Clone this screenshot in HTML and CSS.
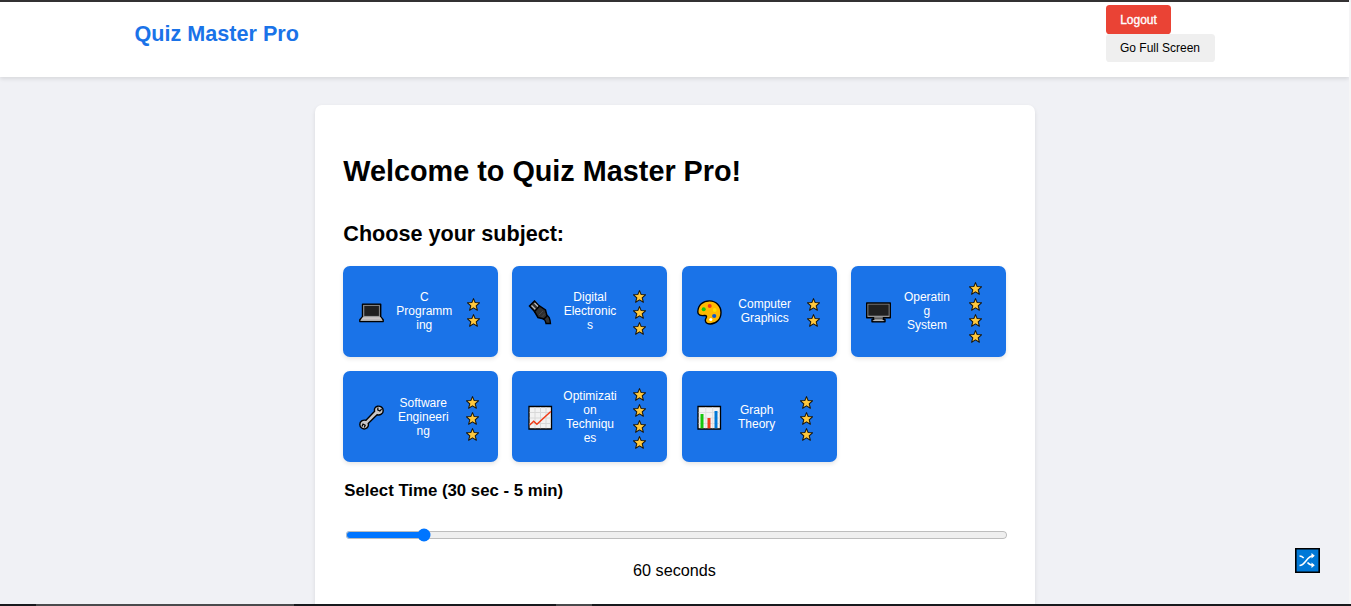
FILE: index.html
```html
<!DOCTYPE html>
<html lang="en">
<head>
<meta charset="utf-8">
<title>Quiz Master Pro</title>
<link rel="stylesheet" href="styles.css">
</head>
<body>
<svg class="defs" width="0" height="0" aria-hidden="true">
  <symbol id="star" viewBox="0 0 13 13"><path d="M6.500 .6 8.200 4.600 12.500 4.800 9.200 7.800 10.400 12.200 6.500 9.900 2.600 12.200 3.800 7.800 .5 4.800 4.800 4.600Z" fill="#ffc83d" stroke="#17150f" stroke-width="1.050" stroke-linejoin="round"/></symbol>
</svg>
<div class="window-edge"></div>
<div class="page">
  <header class="header">
    <div class="header-inner">
      <div class="logo">Quiz Master Pro</div>
      <div class="actions">
        <button class="btn btn-logout">Logout</button>
        <button class="btn btn-full">Go Full Screen</button>
      </div>
    </div>
  </header>
  <main class="panel">
    <h1 class="title">Welcome to Quiz Master Pro!</h1>
    <h2 class="subtitle">Choose your subject:</h2>
    <div class="subjects">
      <div class="subject s-c">
        <svg class="icon" viewBox="0 0 25 25"><path d="M3.500 4.200h18.200v12.500l2.500 3v1.900H.8v-1.900l2.700-3Z" fill="#aaa" stroke="#000" stroke-width="1.400" stroke-linejoin="round"/><path d="M4.200 4.900h16.800v11.500H4.200Z" fill="#808080"/><path d="M5.300 6h14.600v9.900H5.300Z" fill="#202020"/><path d="M3.700 17.300h17.800l1.500 2.300H2.100Z" fill="#c9c4c4"/></svg>
        <span class="label">C<br>Programm<br>ing</span>
        <span class="stars"><svg><use href="#star"/></svg><svg><use href="#star"/></svg></span>
      </div>
      <div class="subject s-digital">
        <svg class="icon" viewBox="0 0 25 25"><path d="M16.500 14c5 1.500 5.500 5 6 9.500h-4.500c-.2-3-1-4-3.500-5Z" fill="#333" stroke="#000" stroke-width="1.300"/><path d="M6.500 1 1.500 6 7 12l5-5Z" fill="#333" stroke="#000" stroke-width="1.500"/><path d="m3.500 5.500 4 4M6.500 3l4 4" stroke="#bbb" stroke-width="1.300"/><path d="M11.500 6 6.500 11.500l3.500 6 6 1.500 3-3-1.500-6Z" fill="#303030" stroke="#000" stroke-width="1.500"/><path d="m11 15 4-4m-1.500 6 3.500-3.500" stroke="#484848"/></svg>
        <span class="label">Digital<br>Electronic<br>s</span>
        <span class="stars"><svg><use href="#star"/></svg><svg><use href="#star"/></svg><svg><use href="#star"/></svg></span>
      </div>
      <div class="subject s-graphics">
        <svg class="icon" viewBox="0 0 25 25"><path d="M.8 12C1 5 6 .9 12.500.9 19 .9 24 6 24 12.500c0 6.800-4.800 11.500-10.700 11.500-5 0-5.800-3.500-4.300-5.800 1.100-1.800.5-2.900-1.600-2.700C4 15.800.8 15.500.8 12Z" fill="#ffb900" stroke="#000" stroke-width="1.400"/><circle cx="12.700" cy="6" r="2" fill="#f03a17"/><circle cx="6.700" cy="9.200" r="2" fill="#16c60c"/><circle cx="17.700" cy="10" r="1.900" fill="#ffdf00"/><circle cx="17.200" cy="16" r="2.100" fill="#1057c8"/><circle cx="13.800" cy="19.500" r="1.600" fill="#fff"/></svg>
        <span class="label">Computer<br>Graphics</span>
        <span class="stars"><svg><use href="#star"/></svg><svg><use href="#star"/></svg></span>
      </div>
      <div class="subject s-os">
        <svg class="icon" viewBox="0 0 25 25"><path d="M.7 3h23.600v14.800h-7v1.700h1.700v2.300H6v-2.300h1.700v-1.700h-7Z" fill="#929292" stroke="#000" stroke-width="1.400" stroke-linejoin="round"/><path d="M2.300 4.500h20.400v11.200H2.300Z" fill="#202020"/><path d="M8 18.200h9" stroke="#444"/><path d="M7.500 20.600h10" stroke="#b8b8b8"/></svg>
        <span class="label">Operatin<br>g<br>System</span>
        <span class="stars"><svg><use href="#star"/></svg><svg><use href="#star"/></svg><svg><use href="#star"/></svg><svg><use href="#star"/></svg></span>
      </div>
      <div class="subject s-software">
        <svg class="icon" viewBox="0 0 25 25"><path d="M18.500 1.200c-2.300.5-3.500 2.600-2.900 5L7 15.300c-3.200-.8-6.200 1-6.200 4.100 0 3 3 5.200 5.700 4.300 2.300-.7 3.400-3 2.700-5.200l8.900-8.700c3 .8 6.100-1 6.100-4.100 0-3-2.500-4.900-5.700-4.500Z" fill="#c8c5c5" stroke="#000" stroke-width="1.400" stroke-linejoin="round"/><path d="m3 21.500 1-2.500 2.200 1.300-.9 2.200M19 2.500l-.3 2.300 2.200 1.200 1.700-1.800" fill="none" stroke="#000" stroke-width="1.200"/></svg>
        <span class="label">Software<br>Engineeri<br>ng</span>
        <span class="stars"><svg><use href="#star"/></svg><svg><use href="#star"/></svg><svg><use href="#star"/></svg></span>
      </div>
      <div class="subject s-optim">
        <svg class="icon" viewBox="0 0 25 25"><path d="M1 1.500h22.500V24H1Z" fill="#f2f2f2" stroke="#000" stroke-width="1.300"/><path d="M7 2.200v21M12.500 2.200v21M18 2.200v21M1.700 7.500h21M1.700 13h21M1.700 18.500h21" stroke="#d8d8d8"/><path d="m1.700 20 4-3.700 3.200 3L22.800 6.500" fill="none" stroke="#f03a17" stroke-width="1.500"/></svg>
        <span class="label">Optimizati<br>on<br>Techniqu<br>es</span>
        <span class="stars"><svg><use href="#star"/></svg><svg><use href="#star"/></svg><svg><use href="#star"/></svg><svg><use href="#star"/></svg></span>
      </div>
      <div class="subject s-graph">
        <svg class="icon" viewBox="0 0 25 25"><path d="M1 1.500h22.500V24H1Z" fill="#f2f2f2" stroke="#000" stroke-width="1.300"/><path d="M8.800 2.200v21M15.700 2.200v21M1.700 7.500h21M1.700 13h21M1.700 18.500h21" stroke="#dedede"/><path d="M3.500 9h3v14.300h-3Z" fill="#16c60c"/><path d="M10.500 13h3v10.300h-3Z" fill="#f03a17"/><path d="M17.500 6h3v17.300h-3Z" fill="#0078d7"/></svg>
        <span class="label">Graph<br>Theory</span>
        <span class="stars"><svg><use href="#star"/></svg><svg><use href="#star"/></svg><svg><use href="#star"/></svg></span>
      </div>
    </div>
    <h3 class="time-title">Select Time (30 sec - 5 min)</h3>
    <input class="slider" type="range" min="30" max="300" value="60">
    <p class="time-value">60 seconds</p>
  </main>
</div>
<div class="taskbar"><span class="task task-wide"></span><span class="task task-small"></span></div>
<svg class="shuffle" viewBox="0 0 25 25"><path d="M.8.8h23.400v23.400H.8Z" fill="#0078d7" stroke="#000" stroke-width="1.600"/><path d="M4.500 8c2 0 3 .7 4.200 2M4.500 17.500c6 0 7-9.700 14-9.700M12.500 14.500c1.500 2 3 2.700 6 2.700" fill="none" stroke="#fff" stroke-width="1.500"/><path d="m16.500 5 3.300 2.800-3.300 2.800ZM16.500 14.400l3.300 2.800-3.300 2.800Z" fill="#fff"/></svg>
</body>
</html>
```

FILE: styles.css
```css
* { box-sizing: border-box; }
body {
  margin: 0;
  height: 606px;
  overflow: hidden;
  display: flex;
  flex-direction: column;
  background: #f0f1f5;
  color: #000;
  font-family: "Liberation Sans", Arial, sans-serif;
  font-size: 14.4px;
}
.defs { position: absolute; }
.window-edge { flex: none; height: 2px; margin-right: 2px; background: #333132; }
.page {
  flex: 1;
  min-height: 0;
  overflow: hidden;
  border-right: 2px solid #f5f5f6;
}
.header { height: 75px; background: #fff; box-shadow: 0 2px 4px rgba(0, 0, 0, .1); }
.header-inner {
  width: 1080px;
  margin: 0 auto;
  display: flex;
  justify-content: space-between;
}
.logo {
  margin-top: 19px;
  color: #1a73e8;
  font-size: 21.6px;
  font-weight: bold;
  line-height: 26px;
}
.actions {
  width: 109px;
  padding-top: 3px;
  display: flex;
  flex-direction: column;
  align-items: flex-start;
}
.btn {
  border: 0;
  border-radius: 3.6px;
  padding: 0;
  height: 28px;
  font: 12px/14px "Liberation Sans", Arial, sans-serif;
}
.btn-logout {
  width: 65px;
  height: 29px;
  padding-left: 1px;
  background: #ea4335;
  color: #fff;
  -webkit-text-stroke: .35px #fff;
}
.btn-full { width: 109px; background: #efefef; color: #000; }
.panel {
  width: 720px;
  height: 620px;
  margin: 28px auto 0;
  padding: 49px 28.8px 0;
  background: #fff;
  border-radius: 7px;
  box-shadow: 0 2px 4px rgba(0, 0, 0, .1);
}
.title { margin: 0; font-size: 28.8px; line-height: 34px; }
.subtitle { margin: 33px 0 19px; font-size: 21.6px; line-height: 26px; }
.subjects {
  display: grid;
  grid-template-columns: repeat(4, 1fr);
  grid-auto-rows: 91px;
  gap: 14px 14.4px;
}
.subject {
  display: flex;
  align-items: center;
  padding-left: 16px;
  background: #1a73e8;
  border-radius: 7px;
  box-shadow: 0 2px 4px rgba(0, 0, 0, .1);
  color: #fff;
  font-size: 12px;
  line-height: 14px;
}
.icon { flex: none; width: 25px; height: 25px; margin: 2px .6px 0 -.6px; }
.label {
  flex: none;
  margin-left: 9px;
  padding-bottom: 2px;
  text-align: center;
  white-space: nowrap;
}
.stars { display: flex; flex-direction: column; padding-top: 1px; }
.stars svg { width: 13px; height: 13px; margin: 1.5px 0; }
.s-software .label, .s-optim .label, .s-graph .label { padding-bottom: 0; }
.s-software .stars, .s-optim .stars, .s-graph .stars { padding-top: 3px; }
.s-c .label { width: 62px; }
.s-c .stars { margin-left: 11.5px; }
.s-digital .label, .s-optim .label { width: 55px; }
.s-digital .stars, .s-optim .stars { margin-left: 16px; }
.s-graphics .label { width: 66px; }
.s-graphics .stars { margin-left: 9.5px; }
.s-os .label { width: 52px; }
.s-os .stars { margin-left: 16.5px; }
.s-software .label { width: 60px; }
.s-software .stars { margin-left: 13px; }
.s-graph .label { width: 50px; }
.s-graph .stars { margin-left: 18.5px; }
.time-title { margin: 19px 0 26px 1px; font-size: 16.8px; line-height: 20px; }
.slider {
  appearance: none;
  display: block;
  width: 661px;
  height: 16px;
  margin: 0 0 0 2.7px;
  background: none;
}
.slider::-webkit-slider-runnable-track {
  height: 8px;
  border-radius: 4px;
  background: linear-gradient(90deg, #0075ff 78px, transparent 78px), #efefef;
  box-shadow: inset 0 0 0 1px #bdbdbd;
}
.slider::-webkit-slider-thumb {
  appearance: none;
  width: 13px;
  height: 13px;
  margin-top: -2.5px;
  border-radius: 50%;
  background: #0075ff;
  transform: translate(-.5px, -.5px);
}
.time-value { margin: 17.500px 0 0; font-size: 16.2px; line-height: 18px; text-align: center; }
.taskbar {
  flex: none;
  height: 2px;
  display: flex;
  padding-left: 36px;
  gap: 262px;
  background: #18191d;
}
.task { background: #4a4a4c; }
.task-wide { width: 258px; }
.task-small { width: 36px; }
.shuffle { position: fixed; left: 1294.5px; top: 548px; width: 25px; height: 25px; }
```
